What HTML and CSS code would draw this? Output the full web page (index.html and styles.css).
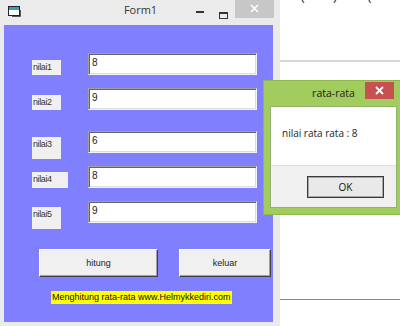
FILE: index.html
```html
<!DOCTYPE html>
<html lang="id">
<head>
    <meta charset="utf-8">
    <title>Form1</title>
    <link rel="stylesheet" href="styles.css">
</head>
<body>
    <div class="desktop">
        <!-- jendela utama Form1 -->
        <div class="window">
            <div class="titlebar">
                <div class="tb-left">
                    <svg class="app-icon" width="13" height="11" viewBox="0 0 13 11">
                        <rect x="0.5" y="0.5" width="11" height="9" fill="#fff" stroke="#222"/>
                        <rect x="1" y="1" width="10" height="3" fill="#2aa6b4"/>
                        <path d="M4 10.5h8.5V4" fill="none" stroke="#555"/>
                    </svg>
                </div>
                <div class="tb-title">Form1</div>
                <div class="tb-right">
                    <div class="tb-btn"><span class="glyph-min"></span></div>
                    <div class="tb-btn"><span class="glyph-max"></span></div>
                    <div class="tb-btn tb-close">
                        <svg width="9" height="9" viewBox="0 0 9 9">
                            <path d="M1 1L8 8M8 1L1 8" stroke="#fff" stroke-width="1.6"/>
                        </svg>
                    </div>
                </div>
            </div>

            <div class="client">
                <div class="fields">
                    <div class="row">
                        <div class="lbl-cell"><div class="lbl">nilai1</div></div>
                        <div class="textbox">8</div>
                    </div>
                    <div class="row">
                        <div class="lbl-cell"><div class="lbl">nilai2</div></div>
                        <div class="textbox">9</div>
                    </div>
                    <div class="row spaced">
                        <div class="lbl-cell"><div class="lbl low tall">nilai3</div></div>
                        <div class="textbox">6</div>
                    </div>
                    <div class="row">
                        <div class="lbl-cell"><div class="lbl low wide">nilai4</div></div>
                        <div class="textbox">8</div>
                    </div>
                    <div class="row">
                        <div class="lbl-cell"><div class="lbl low tall">nilai5</div></div>
                        <div class="textbox">9</div>
                    </div>
                </div>

                <div class="buttons">
                    <div class="btn btn-hitung">hitung</div>
                    <div class="btn btn-keluar">keluar</div>
                </div>

                <div class="caption">Menghitung rata-rata www.Helmykkediri.com</div>
            </div>
        </div>

        <!-- editor di belakang -->
        <div class="pane">
            <div class="code"><span class="kw">Val</span>(Text2) + <span class="kw">Val</span>(Text3</div>
            <div class="rule-a"></div>
            <div class="rule-b"></div>
        </div>

        <!-- kotak pesan -->
        <div class="msgbox">
            <div class="msg-title">rata-rata</div>
            <div class="msg-close">
                <svg width="9" height="9" viewBox="0 0 9 9">
                    <path d="M1 1L8 8M8 1L1 8" stroke="#fff" stroke-width="1.8"/>
                </svg>
            </div>
            <div class="msg-inner">
                <div class="msg-text">nilai rata rata : 8</div>
                <div class="msg-foot">
                    <div class="ok-btn">OK</div>
                </div>
            </div>
        </div>
    </div>
</body>
</html>
```

FILE: styles.css
```css
* {
    box-sizing: border-box;
}

body {
    margin: 0;
    font-family: "Liberation Sans", Arial, sans-serif;
    overflow: hidden;
}

.desktop {
    position: relative;
    width: 400px;
    height: 326px;
    display: flex;
    background: #fff;
    overflow: hidden;
}

/* jendela Form1 */
.window {
    width: 284px;
    height: 326px;
    background: #ebebeb;
    display: flex;
    flex-direction: column;
}

.titlebar {
    height: 25px;
    display: grid;
    grid-template-columns: 1fr auto 1fr;
    align-items: start;
}

.app-icon {
    display: block;
    margin: 6px 0 0 8px;
}

.tb-title {
    font-family: "Open Sans", "Liberation Sans", sans-serif;
    font-size: 11px;
    color: #333;
    line-height: 20px;
    padding-left: 1px;
}

.tb-right {
    display: flex;
    justify-content: flex-end;
    padding-right: 6px;
}

.tb-btn {
    width: 23px;
    height: 18px;
    position: relative;
}

.glyph-min {
    position: absolute;
    left: 7px;
    top: 11px;
    width: 8px;
    height: 2px;
    background: #333;
}

.glyph-max {
    position: absolute;
    left: 7px;
    top: 12px;
    width: 9px;
    height: 7px;
    border: 1px solid #333;
    border-top-width: 2px;
}

.tb-close {
    width: 39px;
    background: #c7c7c7;
    display: flex;
    align-items: center;
    justify-content: center;
}

.tb-close svg {
    margin-top: -1px;
}

.client {
    flex: 1;
    margin: 0 7px 4px 4px;
    background: #8080ff;
    padding: 28px 0 0 28px;
    display: flex;
    flex-direction: column;
    align-items: flex-start;
}

.fields {
    display: flex;
    flex-direction: column;
    gap: 13px;
}

.row {
    display: flex;
    height: 22px;
}

.row.spaced {
    margin-top: 8px;
}

.lbl-cell {
    width: 56px;
}

.lbl {
    width: 29px;
    height: 15px;
    margin-top: 7px;
    background: #f0f0f0;
    font-size: 9px;
    letter-spacing: -0.4px;
    color: #333;
    line-height: 14px;
    padding-left: 1px;
}

.lbl.low {
    margin-top: 6px;
}

.lbl.tall {
    height: 22px;
}

.lbl.wide {
    width: 36px;
    height: 16px;
}

.textbox {
    width: 169px;
    height: 22px;
    background: #fff;
    border: 1px solid;
    border-color: #a0a0a0 #f4f4f4 #f4f4f4 #a0a0a0;
    box-shadow: inset 1px 1px #646464, inset -1px -1px #dcdcdc;
    font-size: 10px;
    color: #222;
    padding: 3px 0 0 3px;
    line-height: 11px;
}

.buttons {
    display: flex;
    gap: 21px;
    margin: 26px 0 0 7px;
}

.btn {
    height: 28px;
    background: #f0f0f0;
    border: 1px solid;
    border-color: #fff #404040 #404040 #fff;
    box-shadow: inset -1px -1px #a0a0a0;
    font-size: 9px;
    color: #222;
    display: flex;
    align-items: center;
    justify-content: center;
}

.btn-hitung {
    width: 119px;
}

.btn-keluar {
    width: 92px;
}

.caption {
    margin: 14px 0 0 19px;
    background: #ffff00;
    font-size: 9px;
    line-height: 13px;
    height: 13px;
    color: #111;
    padding: 0 1px;
}

/* editor di belakang */
.pane {
    flex: 1;
    position: relative;
}

.code {
    margin-top: -10px;
    height: 13px;
    font-size: 12px;
    line-height: 13px;
    white-space: nowrap;
    padding-left: 4px;
    color: #111;
}

.code .kw {
    color: #1c2a9c;
}

.rule-a {
    margin-top: 57px;
    height: 2px;
    background: #d6d6d6;
}

.rule-b {
    margin-top: 237px;
    height: 1px;
    background: #8a8a8a;
}

/* kotak pesan */
.msgbox {
    position: absolute;
    left: 263px;
    top: 80px;
    width: 141px;
    height: 135px;
    background: #a3cc5e;
    border: 1px solid #8fb84c;
    display: flex;
    flex-direction: column;
    padding: 0 6px 6px 6px;
}

.msg-title {
    height: 25px;
    font-family: "Open Sans", "Liberation Sans", sans-serif;
    font-size: 10.5px;
    color: #222;
    text-align: center;
    line-height: 25px;
}

.msg-close {
    position: absolute;
    left: 101px;
    top: 1px;
    width: 29px;
    height: 17px;
    background: #c75050;
    display: flex;
    align-items: center;
    justify-content: center;
}

.msg-inner {
    flex: 1;
    display: flex;
    flex-direction: column;
    border: 1px solid #93b270;
}

.msg-text {
    height: 58px;
    background: #fff;
    font-family: "Open Sans", "Liberation Sans", sans-serif;
    font-size: 10px;
    color: #222;
    padding: 19px 0 0 11px;
}

.msg-foot {
    flex: 1;
    background: #f0f0f0;
    border-top: 1px solid #dfdfdf;
    padding: 10px 0 0 36px;
}

.ok-btn {
    width: 77px;
    height: 22px;
    background: #e9e9e9;
    border: 1px solid #3a3a3a;
    box-shadow: inset 0 0 0 1px #a8a8a8;
    font-family: "Open Sans", "Liberation Sans", sans-serif;
    font-size: 10px;
    color: #111;
    display: flex;
    align-items: center;
    justify-content: center;
}
```
